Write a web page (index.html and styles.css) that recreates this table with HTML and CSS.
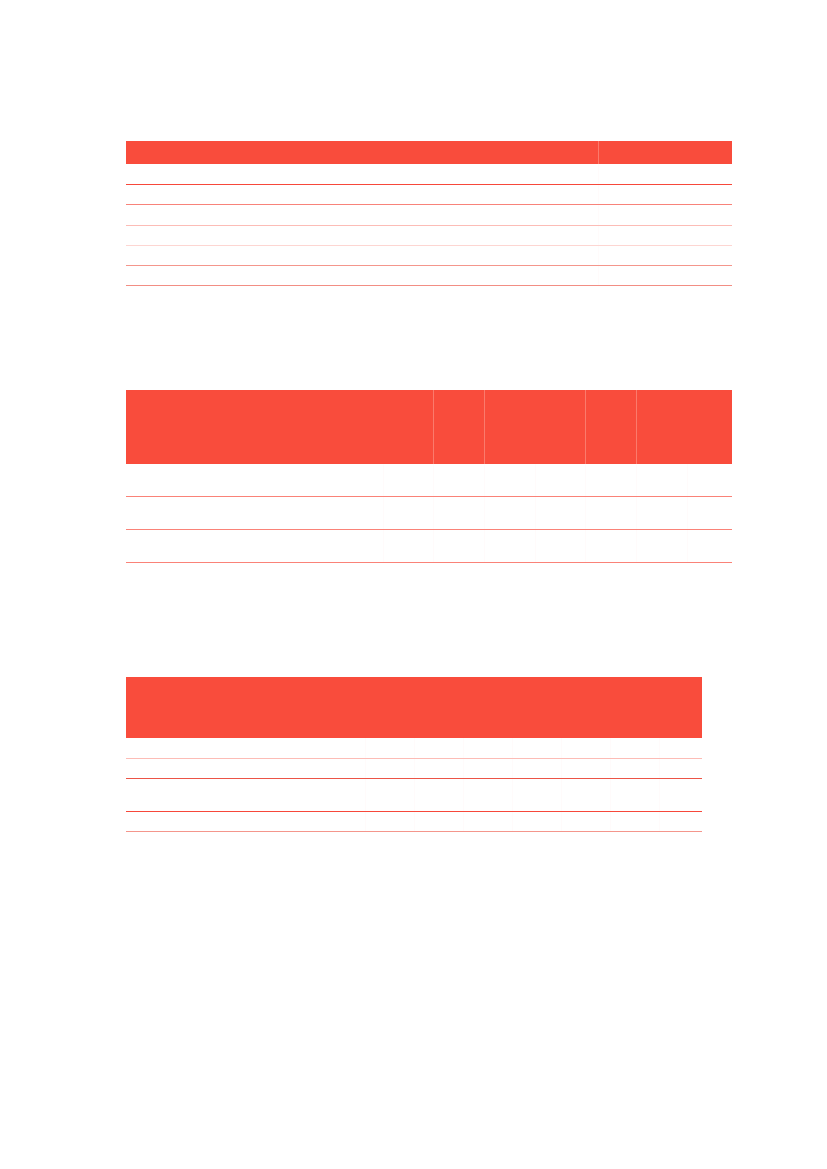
FILE: index.html
```html
<!DOCTYPE html>
<html lang="en">
<head>
<meta charset="utf-8">
<title>Tables</title>
<link rel="stylesheet" href="styles.css">
</head>
<body>
<main class="page">
  <table class="tbl t1">
    <colgroup><col class="c1a"><col class="c1b"></colgroup>
    <thead><tr><th></th><th></th></tr></thead>
    <tbody>
      <tr class="r-strong"><td></td><td></td></tr>
      <tr class="r-mid"><td></td><td></td></tr>
      <tr class="r-light"><td></td><td></td></tr>
      <tr class="r-pale"><td></td><td></td></tr>
      <tr class="r-soft"><td></td><td></td></tr>
      <tr class="r-soft2"><td></td><td></td></tr>
    </tbody>
  </table>

  <table class="tbl t2">
    <colgroup>
      <col class="w257"><col class="w50"><col class="w51"><col class="w51"><col class="w50"><col class="w51"><col class="w51"><col class="w45">
    </colgroup>
    <thead><tr><th colspan="2"></th><th></th><th colspan="2"></th><th></th><th colspan="2"></th></tr></thead>
    <tbody>
      <tr><td></td><td></td><td></td><td></td><td></td><td></td><td></td><td></td></tr>
      <tr><td></td><td></td><td></td><td></td><td></td><td></td><td></td><td></td></tr>
      <tr><td></td><td></td><td></td><td></td><td></td><td></td><td></td><td></td></tr>
    </tbody>
  </table>

  <table class="tbl t3">
    <colgroup>
      <col class="w239"><col class="w49"><col class="w49"><col class="w49"><col class="w49"><col class="w49"><col class="w49"><col class="w43">
    </colgroup>
    <thead><tr><th colspan="8"></th></tr></thead>
    <tbody>
      <tr class="r-light h20"><td></td><td></td><td></td><td></td><td></td><td></td><td></td><td></td></tr>
      <tr class="r-dark h20"><td></td><td></td><td></td><td></td><td></td><td></td><td></td><td></td></tr>
      <tr class="r-strong h33"><td></td><td></td><td></td><td></td><td></td><td></td><td></td><td></td></tr>
      <tr class="r-soft h20"><td></td><td></td><td></td><td></td><td></td><td></td><td></td><td></td></tr>
    </tbody>
  </table>
</main>
</body>
</html>
```

FILE: styles.css
```css
html, body {
  margin: 0;
  padding: 0;
  background: #ffffff;
  font-family: "Liberation Sans", Arial, sans-serif;
}

.page {
  padding: 141px 0 0 126px;
  display: flex;
  flex-direction: column;
  align-items: flex-start;
}

.tbl {
  border-collapse: collapse;
  table-layout: fixed;
}

.tbl th {
  background: #f94c3c;
  padding: 0;
  border-left: 1px solid #fb7a6c;
}

.tbl th:first-child {
  border-left: none;
}

.tbl td {
  padding: 0;
  border-bottom: 1px solid #f88a80;
  border-left: 1px solid rgba(240, 90, 70, 0.025);
}

.tbl td:first-child {
  border-left: none;
}

/* table 1 */
.t1 { width: 606px; }
.c1a { width: 472px; }
.c1b { width: 134px; }
.t1 thead tr { height: 23px; }
.t1 tbody tr { height: 20px; }
.t1 tbody tr:nth-child(3) { height: 21px; }

.r-strong td { border-bottom-color: #f7483a; }
.r-mid td { border-bottom-color: #f8837a; }
.r-light td { border-bottom-color: #fcbcb6; }
.r-pale td { border-bottom-color: #fdd6d2; }
.r-soft td { border-bottom-color: #f4968c; }
.r-soft2 td { border-bottom-color: #f28e84; }
.r-dark td { border-bottom-color: #ec5446; }

/* table 2 */
.t2 { width: 606px; margin-top: 104px; }
.t2 thead tr { height: 74px; }
.t2 tbody tr { height: 33px; }
.t2 td { border-bottom-color: #fa8278; }

.w257 { width: 257px; }
.w50 { width: 50px; }
.w51 { width: 51px; }
.w45 { width: 45px; }

/* table 3 */
.t3 { width: 576px; margin-top: 114px; }
.t3 thead tr { height: 61px; }
.h20 { height: 20px; }
.h33 { height: 33px; }

.w239 { width: 239px; }
.w49 { width: 49px; }
.w43 { width: 43px; }
```
